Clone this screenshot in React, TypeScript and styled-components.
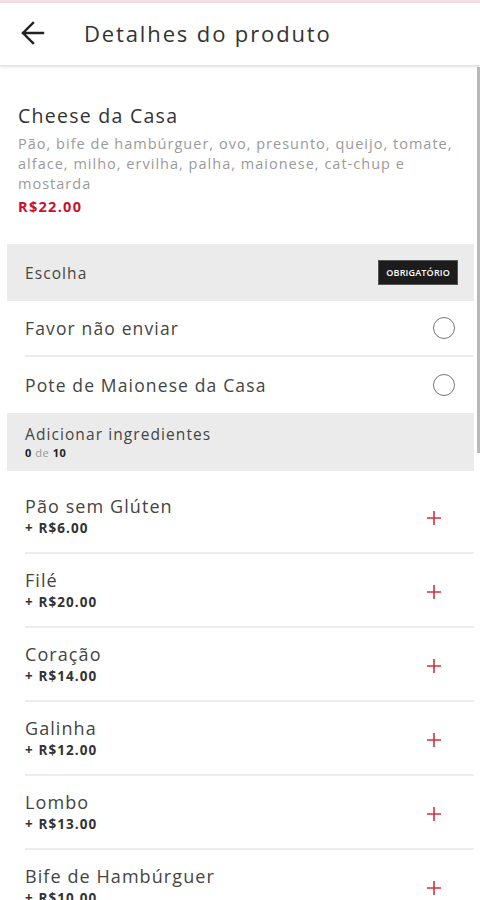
import React from 'react';
import styled, { createGlobalStyle } from 'styled-components';

const GlobalStyle = createGlobalStyle`
  body {
    margin: 0;
    background: #fff;
    font-family: "Open Sans", "Liberation Sans", sans-serif;
    color: #333;
  }
`;

const Page = styled.div`
  position: relative;
  width: 480px;
  min-height: 900px;
  overflow: hidden;
`;

const StatusStrip = styled.div`
  height: 3px;
  background: #f4e1e5;
`;

const Header = styled.header`
  height: 63px;
  display: flex;
  align-items: center;
  gap: 38px;
  padding: 0 0 2px 20px;
  box-sizing: border-box;
  background: #fff;
  border-bottom: 1px solid #e2e2e2;
  box-shadow: 0 1px 3px rgba(0, 0, 0, 0.12);
`;

const BackButton = styled.button`
  display: flex;
  align-items: center;
  background: none;
  border: none;
  padding: 0;
  color: #222;
  cursor: pointer;
`;

const Title = styled.h1`
  margin: 0;
  font-size: 22px;
  font-weight: 500;
  color: #333;
  letter-spacing: 0.085em;
`;

const Product = styled.section`
  padding: 38px 24px 27px 18px;
`;

const ProductName = styled.h2`
  margin: 0;
  font-size: 19.5px;
  line-height: 24px;
  font-weight: 400;
  color: #333;
  letter-spacing: 0.065em;
`;

const Description = styled.p`
  margin: 6px 0 3px;
  font-size: 14.5px;
  line-height: 20px;
  color: #9a9a9a;
  letter-spacing: 0.07em;
`;

const Price = styled.div`
  font-size: 14.5px;
  line-height: 20px;
  font-weight: 700;
  color: #c8102e;
  letter-spacing: 0.09em;
`;

const Content = styled.div`
  padding: 0 6px 0 7px;
`;

const SectionHead = styled.div<{ $tall?: boolean }>`
  display: flex;
  align-items: center;
  justify-content: space-between;
  height: ${(p) => (p.$tall ? '58px' : '57px')};
  padding: 0 16px 0 18px;
  background: #ebebeb;
`;

const SectionTitle = styled.div`
  font-size: 15.5px;
  line-height: 20px;
  color: #444;
  letter-spacing: 0.07em;
`;

const Counter = styled.div`
  margin-top: 2px;
  font-size: 11px;
  line-height: 14px;
  color: #999;
  letter-spacing: 0.05em;
  b {
    color: #222;
    font-weight: 700;
  }
`;

const Badge = styled.span`
  background: #1c1c1c;
  color: #fff;
  font-size: 9px;
  font-weight: 600;
  line-height: 11px;
  padding: 6px 7px;
  letter-spacing: 0.02em;
  border: 1px solid #555;
`;

const Row = styled.div<{ $last?: boolean }>`
  display: flex;
  align-items: center;
  justify-content: space-between;
  box-sizing: border-box;
  margin-left: 18px;
  padding-right: 19px;
  border-bottom: ${(p) => (p.$last ? 'none' : '2px solid #ececec')};
`;

const OptionRow = styled(Row)`
  height: 56px;
`;

const OptionLabel = styled.div`
  font-size: 17.5px;
  color: #444;
  letter-spacing: 0.065em;
`;

const Radio = styled.span`
  width: 20px;
  height: 20px;
  border-radius: 50%;
  border: 1.5px solid #777;
`;

const IngredientRow = styled(Row)<{ $first?: boolean }>`
  height: ${(p) => (p.$first ? '83px' : '74px')};
  padding-top: ${(p) => (p.$first ? '9px' : '0')};
  padding-right: 32px;
`;

const IngredientText = styled.div`
  display: flex;
  flex-direction: column;
  gap: 2px;
`;

const IngredientName = styled.div`
  font-size: 18px;
  line-height: 22px;
  color: #444;
  letter-spacing: 0.06em;
`;

const IngredientPrice = styled.div`
  font-size: 13.5px;
  line-height: 18px;
  font-weight: 700;
  color: #333;
  letter-spacing: 0.08em;
`;

const AddButton = styled.button`
  display: flex;
  margin-top: 4px;
  background: none;
  border: none;
  padding: 0;
  color: #d2323a;
  cursor: pointer;
`;

const ScrollThumb = styled.div`
  position: absolute;
  top: 67px;
  right: 0;
  width: 3px;
  height: 386px;
  background: #b8b8b8;
`;

const ArrowBack = () => (
  <svg width="26" height="26" viewBox="0 0 26 26" fill="none" stroke="currentColor" strokeWidth="2.4" strokeLinecap="square">
    <path d="M3 13h20M13 3L3 13l10 10" />
  </svg>
);

const PlusIcon = () => (
  <svg width="16" height="16" viewBox="0 0 16 16" stroke="currentColor" strokeWidth="1.6">
    <path d="M8 1v14M1 8h14" />
  </svg>
);

const ingredients = [
  { name: 'Pão sem Glúten', price: 6 },
  { name: 'Filé', price: 20 },
  { name: 'Coração', price: 14 },
  { name: 'Galinha', price: 12 },
  { name: 'Lombo', price: 13 },
  { name: 'Bife de Hambúrguer', price: 10 },
];

const options = ['Favor não enviar', 'Pote de Maionese da Casa'];

export default function App() {
  return (
    <Page>
      <GlobalStyle />
      <StatusStrip />
      <Header>
        <BackButton aria-label="Voltar">
          <ArrowBack />
        </BackButton>
        <Title>Detalhes do produto</Title>
      </Header>

      <Product>
        <ProductName>Cheese da Casa</ProductName>
        <Description>
          Pão, bife de hambúrguer, ovo, presunto, queijo, tomate, alface, milho, ervilha, palha, maionese, cat-chup e mostarda
        </Description>
        <Price>R$22.00</Price>
      </Product>

      <Content>
        <SectionHead>
          <SectionTitle>Escolha</SectionTitle>
          <Badge>OBRIGATÓRIO</Badge>
        </SectionHead>
        {options.map((o, i) => (
          <OptionRow key={o} $last={i === options.length - 1}>
            <OptionLabel>{o}</OptionLabel>
            <Radio />
          </OptionRow>
        ))}

        <SectionHead $tall>
          <div>
            <SectionTitle>Adicionar ingredientes</SectionTitle>
            <Counter>
              <b>0</b> de <b>10</b>
            </Counter>
          </div>
        </SectionHead>

        {ingredients.map((item, i) => (
          <IngredientRow key={item.name} $first={i === 0}>
            <IngredientText>
              <IngredientName>{item.name}</IngredientName>
              <IngredientPrice>+ R${item.price.toFixed(2)}</IngredientPrice>
            </IngredientText>
            <AddButton aria-label="Adicionar">
              <PlusIcon />
            </AddButton>
          </IngredientRow>
        ))}
      </Content>

      <ScrollThumb />
    </Page>
  );
}
